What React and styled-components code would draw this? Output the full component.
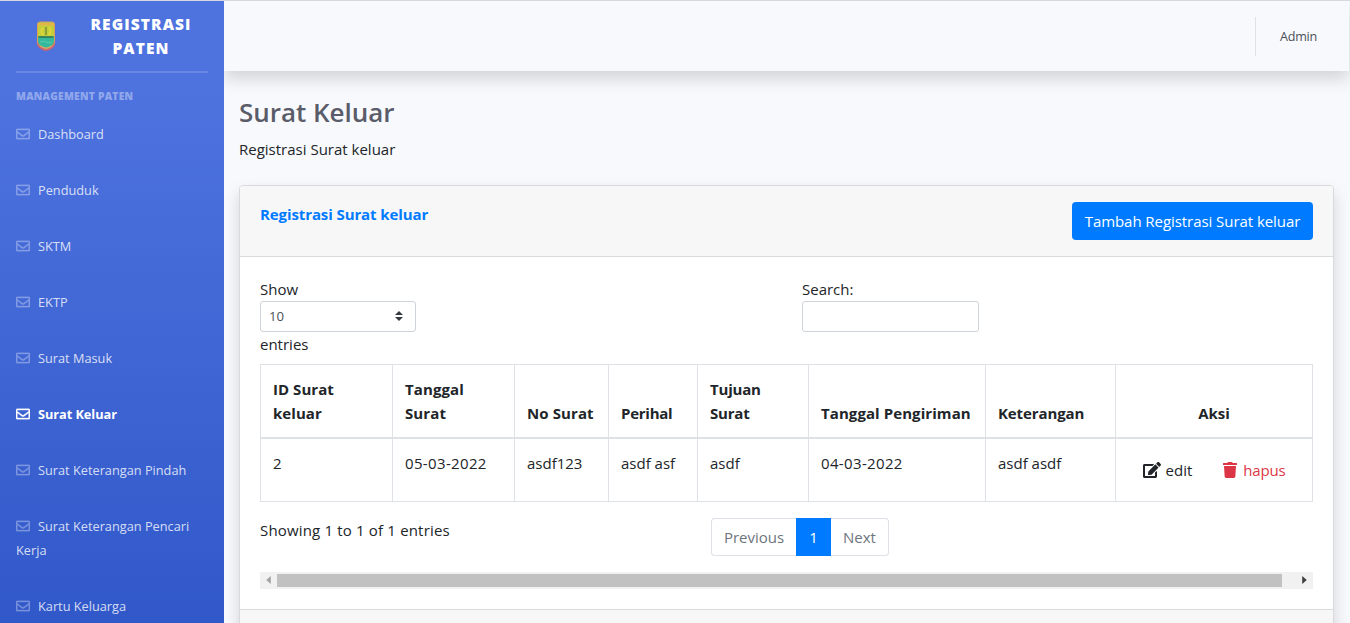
import React from "react";
import styled, { createGlobalStyle, css } from "styled-components";
import { FaRegEnvelope, FaEdit, FaTrash } from "react-icons/fa";

const GlobalStyle = createGlobalStyle`
  *, *::before, *::after { box-sizing: border-box; }
  html, body { margin: 0; height: 100%; overflow: hidden; }
  body {
    font-family: "Open Sans", "Noto Sans", "Liberation Sans", sans-serif;
    font-size: 15px;
    line-height: 24px;
    color: #212529;
    background: #f8f9fc;
  }
`;

const Page = styled.div`
  display: flex;
  height: 623px;
  overflow: hidden;
  border-top: 1px solid #d5d8de;
`;

const Sidebar = styled.nav`
  flex: 0 0 224px;
  z-index: 1;
  height: 898px;
  background: linear-gradient(180deg, #4e73df 10%, #224abe 100%);
`;

const Brand = styled.div`
  display: flex;
  align-items: center;
  height: 70px;
  padding: 0 16px 0 36px;
`;

const BrandName = styled.div`
  flex: 1;
  margin-left: 18px;
  color: #fff;
  font-size: 15.5px;
  font-weight: 800;
  letter-spacing: 1.1px;
  text-align: center;
  text-transform: uppercase;
`;

const Divider = styled.hr`
  margin: 0 16px;
  border: 0;
  height: 2px;
  background: rgba(255, 255, 255, 0.15);
`;

const SideHeading = styled.div`
  padding: 16px 16px 0;
  height: 33px;
  color: rgba(255, 255, 255, 0.4);
  font-size: 10.2px;
  line-height: 15px;
  font-weight: 800;
  letter-spacing: 0.28px;
  text-transform: uppercase;
`;

const NavLink = styled.a`
  display: block;
  padding: 16px;
  font-size: 12.75px;
  line-height: 24px;
  color: rgba(255, 255, 255, 0.8);
  font-weight: 400;

  svg {
    width: 14px;
    height: 14px;
    margin-right: 8px;
    vertical-align: -2px;
    color: rgba(255, 255, 255, 0.3);
    stroke: currentColor;
    stroke-width: 12px;
  }

  ${(p) =>
    p.$active &&
    css`
      color: #fff;
      font-weight: 700;
      letter-spacing: -0.05px;
      svg { color: #fff; }
    `}
`;

const Content = styled.main`
  flex: 1;
  min-width: 0;
`;

const Topbar = styled.header`
  display: flex;
  align-items: center;
  justify-content: flex-end;
  height: 70px;
  margin-right: 1px;
  background: #f8f9fc;
  box-shadow: 0 8px 16px rgba(0, 0, 0, 0.15);
`;

const UserMenu = styled.div`
  height: 39px;
  padding: 0 32px 0 24px;
  border-left: 1px solid #e0e2ea;
  font-size: 12.6px;
  letter-spacing: -0.25px;
  line-height: 39px;
  color: #4b4e59;
`;

const Container = styled.section`
  padding: 23px 16px 0 15px;
`;

const Title = styled.h1`
  margin: 0 0 7px;
  font-size: 26px;
  line-height: 36px;
  font-weight: 600;
  letter-spacing: -0.02px;
  color: #5a5c69;
`;

const Subtitle = styled.p`
  margin: 0 0 24px;
`;

const Card = styled.div`
  border: 1px solid #d9dade;
  border-radius: 4px;
  background: #fff;
  box-shadow: 0 8px 16px rgba(0, 0, 0, 0.15);
`;

const CardHeader = styled.div`
  display: flex;
  justify-content: space-between;
  align-items: flex-start;
  height: 71px;
  padding: 16px 20px;
  background: #f7f7f7;
  border-bottom: 1px solid #d9dade;
  border-radius: 3px 3px 0 0;
`;

const CardTitle = styled.h6`
  margin: 0;
  font-size: 15px;
  line-height: 24px;
  font-weight: 700;
  letter-spacing: -0.1px;
  color: #007bff;
`;

const PrimaryButton = styled.button`
  height: 38px;
  width: 241px;
  padding: 0;
  border: 0;
  border-radius: 4px;
  background: #007bff;
  color: #fff;
  font: inherit;
  letter-spacing: -0.06px;
`;

const CardBody = styled.div`
  padding: 20px;
`;

const CardFooter = styled.div`
  height: 60px;
  background: #f7f7f7;
  border-top: 1px solid #d9dade;
`;

const Filters = styled.div`
  display: grid;
  grid-template-columns: 542px 1fr;
  margin-bottom: 8px;
`;

const Field = styled.label`
  display: block;
`;

const SelectBox = styled.div`
  display: flex;
  align-items: center;
  justify-content: space-between;
  width: 156px;
  height: 31px;
  padding: 0 12px 1px 8px;
  border: 1px solid #ced4da;
  border-radius: 3px;
  font-size: 13.2px;
  color: #495057;
`;

const SearchInput = styled.input`
  display: block;
  width: 177px;
  height: 31px;
  border: 1px solid #ced4da;
  border-radius: 3px;
  background: #fff;
`;

const Table = styled.table`
  width: 1052px;
  table-layout: fixed;
  border-collapse: collapse;
`;

const Th = styled.th`
  height: 73px;
  padding: 12px;
  border: 1px solid #dee2e6;
  border-bottom-width: 2px;
  text-align: ${(p) => (p.$center ? "center" : "left")};
  vertical-align: bottom;
  font-weight: 700;
  letter-spacing: ${(p) => p.$tracking || 0}px;
  white-space: ${(p) => (p.$nowrap ? "nowrap" : "normal")};
`;

const Td = styled.td`
  height: 63px;
  padding: 12px;
  border: 1px solid #dee2e6;
  vertical-align: top;
  letter-spacing: ${(p) => p.$tracking || 0}px;
`;

const Actions = styled.div`
  display: flex;
  justify-content: center;
  gap: 30px;
  padding-top: 7px;
`;

const Action = styled.a`
  display: flex;
  align-items: center;
  gap: 5px;
  color: ${(p) => (p.$danger ? "#dc3545" : "#212529")};
  letter-spacing: ${(p) => (p.$danger ? -0.2 : 0)}px;
`;

const TableFooter = styled.div`
  display: grid;
  grid-template-columns: 451px 1fr;
  height: 70px;
  padding-top: 16px;
`;

const Info = styled.div`
  letter-spacing: 0.17px;
`;

const Pagination = styled.div`
  display: flex;
  height: 38px;
`;

const PageItem = styled.a`
  width: ${(p) => p.$width}px;
  border: 1px solid ${(p) => (p.$active ? "#007bff" : "#dee2e6")};
  border-left-width: ${(p) => (p.$edge === "right" ? 0 : 1)}px;
  border-right-width: ${(p) => (p.$edge === "left" ? 0 : 1)}px;
  border-radius: ${(p) =>
    p.$edge === "left" ? "4px 0 0 4px" : p.$edge === "right" ? "0 4px 4px 0" : 0};
  background: ${(p) => (p.$active ? "#007bff" : "#fff")};
  color: ${(p) => (p.$active ? "#fff" : "#6c757d")};
  line-height: 37px;
  text-align: center;
`;

const Scrollbar = styled.div`
  display: flex;
  align-items: center;
  justify-content: space-between;
  height: 17px;
  background: #f1f1f1;
`;

const ScrollArrow = styled.span`
  display: flex;
  align-items: center;
  justify-content: center;
  width: 17px;
  height: 17px;
  color: ${(p) => (p.$disabled ? "#a3a3a3" : "#404040")};
`;

const ScrollThumb = styled.span`
  width: 1005px;
  height: 13px;
  margin-right: auto;
  background: #c1c1c1;
`;

const Logo = () => (
  <svg width="20" height="31" viewBox="0 0 20 31">
    <path d="M0.500 20.500 L3 22 Q6 26 10 27 Q14 26 17 22 L19.500 20.500 L18.500 25 Q15 29.500 10 30 Q5 29.500 1.500 25Z" fill="#cc6270" />
    <path d="M1.500 3 Q1.500 1 4 1 H16 Q18.500 1 18.500 3 V20 Q18.500 25 10 28 Q1.500 25 1.500 20Z" fill="#36b99b" stroke="#dd9c58" strokeWidth="1" />
    <path d="M2 3 Q2 1.500 4 1.500 H16 Q18 1.500 18 3 V15.500 H2Z" fill="#c3cf3a" />
    <path d="M2 3 Q2 1.500 4 1.500 H16 Q18 1.500 18 3 V4.500 H2Z" fill="#e0b648" />
    <path d="M7 6.500 Q3.500 10.500 7.500 14 M13 6.500 Q16.500 10.500 12.500 14" fill="none" stroke="#e6d83c" strokeWidth="1.500" />
    <path d="M10 6 V14" stroke="#5b7030" strokeWidth="1" />
    <path d="M2.500 16 H17.500" stroke="#2f7352" strokeWidth="1.500" />
    <path d="M4 21 Q7 19.500 10 21 T16 21" fill="none" stroke="#55cbb0" />
    <path d="M4.500 25 Q10 29 15.500 25" fill="none" stroke="#dba86a" strokeWidth="1.200" />
  </svg>
);

const menu = [
  "Dashboard",
  "Penduduk",
  "SKTM",
  "EKTP",
  "Surat Masuk",
  "Surat Keluar",
  "Surat Keterangan Pindah",
  "Surat Keterangan Pencari Kerja",
  "Kartu Keluarga",
];

const columns = [
  { label: "ID Surat keluar", width: 132, value: "2", head: 0.05 },
  { label: "Tanggal Surat", width: 122, value: "05-03-2022", head: 0.1, body: 0.35 },
  { label: "No Surat", width: 94, value: "asdf123", head: 0.1 },
  { label: "Perihal", width: 89, value: "asdf asf", head: -0.25 },
  { label: "Tujuan Surat", width: 111, value: "asdf", head: -0.2 },
  { label: "Tanggal Pengiriman", width: 177, value: "04-03-2022", head: 0.08, body: 0.35, nowrap: true },
  { label: "Keterangan", width: 130, value: "asdf asdf", head: -0.1 },
];

export default function App() {
  return (
    <>
      <GlobalStyle />
      <Page>
        <Sidebar>
          <Brand>
            <Logo />
            <BrandName>Registrasi Paten</BrandName>
          </Brand>
          <Divider />
          <SideHeading>Management Paten</SideHeading>
          {menu.map((item) => (
            <NavLink key={item} $active={item === "Surat Keluar"}>
              <FaRegEnvelope />
              {item}
            </NavLink>
          ))}
        </Sidebar>
        <Content>
          <Topbar>
            <UserMenu>Admin</UserMenu>
          </Topbar>
          <Container>
            <Title>Surat Keluar</Title>
            <Subtitle>Registrasi Surat keluar</Subtitle>
            <Card>
              <CardHeader>
                <CardTitle>Registrasi Surat keluar</CardTitle>
                <PrimaryButton>Tambah Registrasi Surat keluar</PrimaryButton>
              </CardHeader>
              <CardBody>
                <Filters>
                  <Field>
                    Show
                    <SelectBox>
                      10
                      <svg width="8" height="10" viewBox="0 0 8 10" fill="#343a40">
                        <path d="M4 0 L8 4 H0Z M4 10 L0 6 H8Z" />
                      </svg>
                    </SelectBox>
                    entries
                  </Field>
                  <Field>
                    Search:
                    <SearchInput />
                  </Field>
                </Filters>
                <Table>
                  <colgroup>
                    {columns.map((c) => (
                      <col key={c.label} width={c.width} />
                    ))}
                    <col width={197} />
                  </colgroup>
                  <thead>
                    <tr>
                      {columns.map((c) => (
                        <Th key={c.label} $tracking={c.head} $nowrap={c.nowrap}>
                          {c.label}
                        </Th>
                      ))}
                      <Th $center>Aksi</Th>
                    </tr>
                  </thead>
                  <tbody>
                    <tr>
                      {columns.map((c) => (
                        <Td key={c.label} $tracking={c.body}>{c.value}</Td>
                      ))}
                      <Td>
                        <Actions>
                          <Action>
                            <FaEdit size={18} />
                            edit
                          </Action>
                          <Action $danger>
                            <FaTrash size={16} />
                            hapus
                          </Action>
                        </Actions>
                      </Td>
                    </tr>
                  </tbody>
                </Table>
                <TableFooter>
                  <Info>Showing 1 to 1 of 1 entries</Info>
                  <Pagination>
                    <PageItem $width={85} $edge="left">Previous</PageItem>
                    <PageItem $width={35} $active>1</PageItem>
                    <PageItem $width={58} $edge="right">Next</PageItem>
                  </Pagination>
                </TableFooter>
                <Scrollbar>
                  <ScrollArrow $disabled>
                    <svg width="5" height="8" viewBox="0 0 4 7"><path d="M4 0 V7 L0 3.500Z" fill="currentColor" /></svg>
                  </ScrollArrow>
                  <ScrollThumb />
                  <ScrollArrow>
                    <svg width="5" height="8" viewBox="0 0 4 7"><path d="M0 0 V7 L4 3.500Z" fill="currentColor" /></svg>
                  </ScrollArrow>
                </Scrollbar>
              </CardBody>
              <CardFooter />
            </Card>
          </Container>
        </Content>
      </Page>
    </>
  );
}
